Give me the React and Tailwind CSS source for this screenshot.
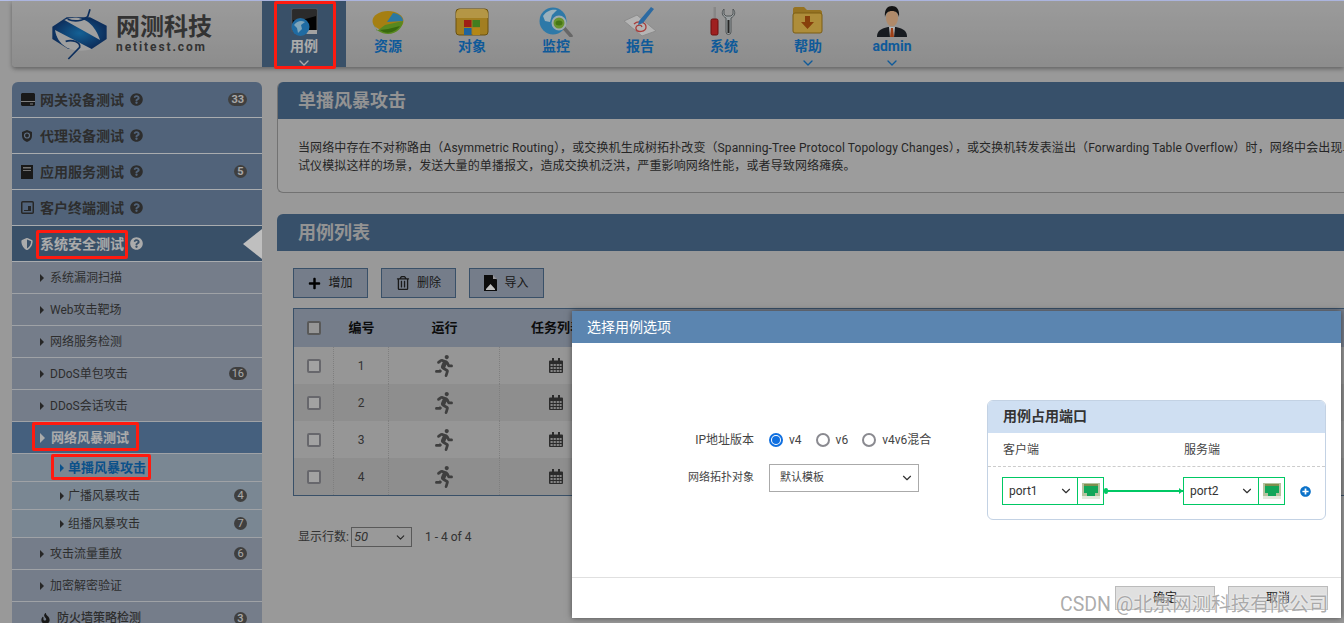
import { ChevronDown } from 'lucide-react'
import { FaFire, FaPlus, FaPlusCircle, FaQuestionCircle, FaRegTrashAlt, FaRunning, FaShieldAlt } from 'react-icons/fa'

/* Nav icons, drawn by hand. All share a 40x36 box */
function CaseIcon() {
  return (
    <svg width="40" height="36" viewBox="0 0 40 36" className="shrink-0">
      <rect x="8" y="8" width="25" height="22" fill="#050505" stroke="#777" />
      <path d="M9 9h23v6L18 19H9z" fill="#3a3a3a" />
      <path d="M20 29h13v4H20z" fill="#d8d8d8" />
      <circle cx="16.5" cy="26" r="9" fill="#2a8fd8" />
      <path d="M10 24c3-4 7-5 11-3l-4 3 1 4-4 4-1-5z" fill="#a8dcf8" />
    </svg>
  )
}

function ResourceIcon() {
  return (
    <svg width="40" height="36" viewBox="0 0 40 36" className="shrink-0">
      <ellipse cx="20" cy="20" rx="15.5" ry="10" fill="#dcaa18" />
      <path d="M5 22c2 7 8 11 15 11 9 0 15-7 15-13l-18 4-8 6z" fill="#76b62a" />
      <path d="M19 21l6-9c5 0 10 4 10 8z" fill="#39a0d8" />
      <path d="M12 29c5 4 14 4 20-4l-12 3z" fill="#4b8c10" />
    </svg>
  )
}

function ObjectIcon() {
  return (
    <svg width="40" height="36" viewBox="0 0 40 36" className="shrink-0">
      <rect x="4" y="8" width="32" height="26" rx="3" fill="#d8a82c" stroke="#8e6c14" />
      <path d="M4 14c0-4 2-6 5-6h22c3 0 5 2 5 6v3H4z" fill="#f0c95c" />
      <rect x="12" y="19" width="7.5" height="7" fill="#d4281e" />
      <rect x="20.5" y="19" width="7.5" height="7" fill="#5aa82a" />
      <rect x="12" y="27" width="7.5" height="7" fill="#2a86d4" />
      <rect x="20.5" y="27" width="7.5" height="7" fill="#f0b41e" />
    </svg>
  )
}

function MonitorIcon() {
  return (
    <svg width="40" height="36" viewBox="0 0 40 36" className="shrink-0">
      <circle cx="17" cy="20" r="13.5" fill="#3ea2e0" />
      <path d="M7 15c4-6 10-7 14-6l-5 5-2 7-5-1z" fill="#d0ecfb" />
      <path d="M28 27l7 8" stroke="#8a8a8a" strokeWidth="3.5" strokeLinecap="round" />
      <circle cx="23" cy="22" r="6.5" fill="#8cc63f" stroke="#d5e4ea" strokeWidth="2" />
      <ellipse cx="23" cy="22" rx="3.5" ry="2.5" fill="#5d9e1c" />
    </svg>
  )
}

function ReportIcon() {
  return (
    <svg width="40" height="36" viewBox="0 0 40 36" className="shrink-0">
      <path d="M4 20l13-6 19 16-14 5z" fill="#f0f0f0" stroke="#bbb" />
      <path d="M14 23c4-4 12-2 12 3s-9 6-10 2 5-5 6-2" fill="none" stroke="#e0524f" strokeWidth="1.3" />
      <path d="M19 20L31 6l3 2-11 14-5 2z" fill="#3b8ed8" />
    </svg>
  )
}

function SystemIcon() {
  return (
    <svg width="40" height="36" viewBox="0 0 40 36" className="shrink-0">
      <rect x="9.5" y="6" width="2.5" height="12" fill="#b5b5b5" />
      <rect x="7" y="18" width="7" height="16" rx="1.5" fill="#d52b2b" stroke="#901515" />
      <path d="M20 8c-3 3-2 7 2 9v14a2.5 2.5 0 005 0V17c4-2 5-6 2-9v5l-2 2h-5l-2-2z" fill="#cfd6d9" stroke="#6d7375" />
      <rect x="23.5" y="19" width="2" height="13" fill="#333" />
    </svg>
  )
}

function HelpIcon() {
  return (
    <svg width="40" height="36" viewBox="0 0 40 36" className="shrink-0">
      <path d="M5 8c0-1 1-2 2-2h9l3 3h13c1 0 2 1 2 2v3H5z" fill="#c99a2e" />
      <rect x="5" y="12" width="29" height="20" rx="2" fill="#e8bd4e" stroke="#a57d1c" />
      <path d="M17 15h5v6h4l-6.500 7-6.500-7h4z" fill="#b4540f" />
    </svg>
  )
}

function AdminIcon() {
  return (
    <svg width="40" height="36" viewBox="0 0 40 36" className="shrink-0">
      <path d="M5 36c0-6 3-8 11-10h8c8 2 11 4 11 10z" fill="#20252b" />
      <path d="M17 26h6l-1 10h-4z" fill="#f4f4f4" />
      <path d="M19 27h2l1 9h-4z" fill="#d2541e" />
      <ellipse cx="20" cy="17" rx="6" ry="8.500" fill="#eab98e" />
      <path d="M13 16c-1-8 3-11 7-11s8 3 7 11c-1-4-3-6-7-6s-6 2-7 6z" fill="#1a1a1a" />
    </svg>
  )
}

function LogoMark() {
  return (
    <svg width="70" height="60" viewBox="0 0 210 180" className="shrink-0">
      <defs>
        <radialGradient id="band" cx="0.5" cy="0.5" r="0.5">
          <stop offset="0" stopColor="#1b82c8" />
          <stop offset="1" stopColor="#123f7c" />
        </radialGradient>
      </defs>
      <path d="M22 68L65 40h70l50 25v40l-45 30H70l-48-30z" fill="url(#band)" />
      <path d="M58 48c35-16 85-8 107 60z" fill="#d4d4d4" />
      <path d="M30 78l110 57c-40 12-100 5-110-57z" fill="#d4d4d4" />
      <path d="M68 46c20 8 45 6 60-8l7-22" fill="none" stroke="#123f7c" strokeWidth="5" />
      <path d="M62 112c20-6 45 2 42 18L70 165" fill="none" stroke="#123f7c" strokeWidth="5" />
    </svg>
  )
}

function ImportIcon() {
  return (
    <svg width="13" height="16" viewBox="0 0 13 16">
      <path d="M0 0h8.500L13 4.500V16H0z" fill="#111" />
      <path d="M9 0l4 4H9z" fill="#c8c8d0" />
      <path d="M2 14h9v1H2zM6.500 9l4.500 5H2z" fill="#fff" />
    </svg>
  )
}

function CalendarIcon() {
  return (
    <svg width="14" height="15" viewBox="0 0 14 15">
      <path d="M1 2.500h12a1 1 0 011 1V14a1 1 0 01-1 1H1a1 1 0 01-1-1V3.500a1 1 0 011-1z" fill="#3a3a3a" />
      <path d="M3 0h2v4H3zM9 0h2v4H9z" fill="#3a3a3a" />
      <path
        d="M1.500 6h2.200v2H1.500zM4.600 6h2.200v2H4.600zM7.700 6h2.200v2H7.700zM10.600 6h2v2h-2zM1.500 9h2.200v2H1.500zM4.600 9h2.200v2H4.600zM7.700 9h2.200v2H7.700zM10.600 9h2v2h-2zM1.500 12h2.200v2H1.500zM4.600 12h2.200v2H4.600zM7.700 12h2.200v2H7.700zM10.600 12h2v2h-2z"
        fill="#b0b0b0"
      />
    </svg>
  )
}

function DriveIcon() {
  return (
    <svg width="14" height="13" viewBox="0 0 14 13">
      <path d="M1 0h12l1 1v11l-1 1H1l-1-1V1z" fill="#222" />
      <path d="M0 8h14v1H0zM9 10.500h3v1H9z" fill="#aaa" />
    </svg>
  )
}

function ProxyIcon() {
  return (
    <svg width="12" height="12" viewBox="0 0 12 12">
      <path d="M6 0l5 2v4c0 3-2 5-5 6-3-1-5-3-5-6V2z" fill="#333" />
      <circle cx="6" cy="5.500" r="2.500" fill="none" stroke="#8097b3" strokeWidth="1.200" />
    </svg>
  )
}

function TabletIcon() {
  return (
    <svg width="13" height="13" viewBox="0 0 13 13">
      <rect x="0.750" y="0.750" width="11.500" height="11.500" rx="1" fill="none" stroke="#333" strokeWidth="1.500" />
      <path d="M3 9h4V5h3v5H3z" fill="#333" />
    </svg>
  )
}

function ServerIcon() {
  return (
    <svg width="12" height="14" viewBox="0 0 12 14">
      <path d="M0 0h12v14H0z" fill="#222" />
      <path d="M2 2h8v1.500H2zM2 5h8v1H2z" fill="#999" />
    </svg>
  )
}

function PortIcon() {
  return (
    <svg width="18" height="16" viewBox="0 0 18 16">
      <rect width="18" height="16" fill="#b5c4a0" />
      <path d="M2 1h14v9h-3v3H5v-3H2z" fill="#12a659" />
      <path d="M2 1h14v2H2z" fill="#7f8f4e" />
      <rect y="13" width="18" height="3" fill="#e4e8dd" />
    </svg>
  )
}

function Badge({ children }) {
  return (
    <span className="ml-auto mr-[15px] flex h-[13px] min-w-[13px] items-center justify-center rounded-full bg-[#555] px-[3px] text-[11px] leading-none text-[#e0e0e0]">
      {children}
    </span>
  )
}

function Help({ className = 'text-[#3d3d3d]' }) {
  return <FaQuestionCircle className={`ml-[6px] text-[13px] ${className}`} />
}

function GroupItem({ icon, label, badge }) {
  return (
    <div className="flex h-9 items-center border-b border-[#e2e6ea] bg-[#6c85a3] pl-[9px] text-sm font-bold text-[#3d3d3d]">
      <span className="flex w-[19px] items-center">{icon}</span>
      <span>{label}</span>
      <Help />
      {badge && <Badge>{badge}</Badge>}
    </div>
  )
}

function SubItem({ label, badge }) {
  return (
    <div className="flex h-8 items-center border-b border-[#d5d9de] bg-[#9ca7b8] pl-[28px] text-xs text-[#3d3d3d]">
      <span className="mr-[6px] h-0 w-0 border-y-[4px] border-l-[4px] border-y-transparent border-l-[#333]" />
      <span>{label}</span>
      {badge && <Badge>{badge}</Badge>}
    </div>
  )
}

function LeafItem({ label, badge, active }) {
  return (
    <div
      className={`flex h-7 items-center border-b border-[#d5d9de] bg-[#a3b4c4] pl-[48px] ${
        active ? 'text-[13px] font-bold text-[#0f6cb8]' : 'text-xs text-[#3d3d3d]'
      }`}
    >
      <span
        className={`mr-[4px] h-0 w-0 border-y-[4px] border-l-[4px] border-y-transparent ${
          active ? 'border-l-[#0f6cb8]' : 'border-l-[#333]'
        }`}
      />
      <span>{label}</span>
      {badge && <Badge>{badge}</Badge>}
    </div>
  )
}

function Sidebar() {
  return (
    <aside className="w-[250px] shrink-0 overflow-hidden rounded-t-md">
      <GroupItem icon={<DriveIcon />} label="网关设备测试" badge="33" />
      <GroupItem icon={<ProxyIcon />} label="代理设备测试" />
      <GroupItem icon={<ServerIcon />} label="应用服务测试" badge="5" />
      <GroupItem icon={<TabletIcon />} label="客户终端测试" />
      <div className="relative flex h-9 items-center border-b border-[#e2e6ea] bg-[#4d6b8b] pl-[9px] text-sm font-bold text-[#e4e4e4]">
        <span className="flex w-[19px] items-center">
          <FaShieldAlt className="text-[12px]" />
        </span>
        <span>系统安全测试</span>
        <Help className="text-[#e4e4e4]" />
        <span className="absolute right-0 top-[3px] h-0 w-0 border-y-[15px] border-r-[19px] border-y-transparent border-r-white" />
      </div>
      <SubItem label="系统漏洞扫描" />
      <SubItem label="Web攻击靶场" />
      <SubItem label="网络服务检测" />
      <SubItem label="DDoS单包攻击" badge="16" />
      <SubItem label="DDoS会话攻击" />
      <div className="flex h-8 items-center border-b border-[#d5d9de] bg-[#5d80a8] pl-[28px] text-[13px] font-bold text-[#e4e4e4]">
        <span className="mr-[6px] h-0 w-0 border-y-[5px] border-l-[5px] border-y-transparent border-l-[#e4e4e4]" />
        <span>网络风暴测试</span>
      </div>
      <LeafItem label="单播风暴攻击" active />
      <LeafItem label="广播风暴攻击" badge="4" />
      <LeafItem label="组播风暴攻击" badge="7" />
      <SubItem label="攻击流量重放" badge="6" />
      <SubItem label="加密解密验证" />
      <div className="flex h-8 items-center bg-[#9ca7b8] pl-[28px] text-xs font-medium text-[#3d3d3d]">
        <FaFire className="mr-[6px] text-[11px] text-[#222]" />
        <span>防火墙策略检测</span>
        <Badge>3</Badge>
      </div>
    </aside>
  )
}

function ToolButton({ icon, label }) {
  return (
    <button className="flex h-[30px] w-[75px] items-center justify-center gap-[7px] border border-[#4d6b8b] bg-[#9ca7b8] text-xs text-[#222]">
      {icon}
      {label}
    </button>
  )
}

function CaseRow({ n, striped }) {
  return (
    <div className={`grid h-[37px] grid-cols-[40px_55px_111px_1fr] items-center ${striped ? 'bg-[#bebebe]' : 'bg-[#c8c8c8]'}`}>
      <div className="flex h-full items-center justify-center border-r border-dotted border-[#aaa]">
        <span className="h-[14px] w-[14px] rounded-[2px] border-2 border-[#8a8a90] bg-[#d8d8d8]" />
      </div>
      <div className="flex h-full items-center justify-center border-r border-dotted border-[#aaa] text-xs text-[#444]">{n}</div>
      <div className="flex h-full items-center justify-center border-r border-dotted border-[#aaa]">
        <FaRunning className="text-[22px] text-[#555]" />
      </div>
      <div className="flex h-full items-center pl-[49px]">
        <CalendarIcon />
      </div>
    </div>
  )
}

function MainContent() {
  return (
    <main className="min-w-0 flex-1">
      <section className="h-[111px] overflow-hidden rounded-l-md border-b border-l border-[#999] bg-[#d0d0d0]">
        <h2 className="flex h-[37px] items-center bg-[#4a6b8e] pl-[20px] text-lg font-bold text-[#c4c4c4]">单播风暴攻击</h2>
        <div className="px-[20px] pt-[20px] text-xs leading-[18px] tracking-[0.12px] whitespace-nowrap text-[#333]">
          <p>当网络中存在不对称路由（Asymmetric Routing），或交换机生成树拓扑改变（Spanning-Tree Protocol Topology Changes），或交换机转发表溢出（Forwarding Table Overflow）时，网络中会出现单播风暴。</p>
          <p>试仪模拟这样的场景，发送大量的单播报文，造成交换机泛洪，严重影响网络性能，或者导致网络瘫痪。</p>
        </div>
      </section>

      <section className="mt-[21px] overflow-hidden rounded-tl-md">
        <h2 className="flex h-[37px] items-center bg-[#4a6b8e] pl-[21px] text-lg font-bold text-[#c4c4c4]">用例列表</h2>
        <div className="pl-[16px] pt-[17px]">
          <div className="flex gap-[13px]">
            <ToolButton icon={<FaPlus className="text-[13px] text-[#000]" />} label="增加" />
            <ToolButton icon={<FaRegTrashAlt className="text-[14px] text-[#222]" />} label="删除" />
            <ToolButton icon={<ImportIcon />} label="导入" />
          </div>
          <div className="mt-[10px] border-y border-l border-[#4d6b8b]">
            <div className="grid h-[38px] grid-cols-[40px_55px_111px_1fr] items-center bg-[#9ca7b8] text-[13px] font-bold text-[#111]">
              <div className="flex justify-center">
                <span className="h-[14px] w-[14px] rounded-[2px] border-2 border-[#777] bg-[#c8c8c8]" />
              </div>
              <div className="text-center">编号</div>
              <div className="text-center">运行</div>
              <div className="pl-[31px]">任务列表</div>
            </div>
            <CaseRow n="1" />
            <CaseRow n="2" striped />
            <CaseRow n="3" />
            <CaseRow n="4" striped />
          </div>
          <div className="mt-[31px] flex items-center pl-[5px] text-xs text-[#444]">
            <span>显示行数:</span>
            <span className="ml-[2px] flex h-[20px] w-[61px] items-center justify-between border border-[#777] pl-[2px] pr-[4px] text-[13px] italic">
              50
              <ChevronDown size={13} className="text-[#333]" />
            </span>
            <span className="ml-[13px]">1 - 4 of 4</span>
          </div>
        </div>
      </section>
    </main>
  )
}

function PortSelect({ name }) {
  return (
    <div className="flex h-[28px] w-[102px] border border-[#00c864]">
      <span className="flex w-[74px] items-center justify-between pl-[6px] pr-[4px] text-xs text-[#333]">
        {name}
        <ChevronDown size={14} className="text-[#333]" />
      </span>
      <span className="flex flex-1 items-center justify-center border-l border-[#00c864]">
        <PortIcon />
      </span>
    </div>
  )
}

function Radio({ label, checked }) {
  return (
    <span className="flex items-center gap-[6px] text-xs text-[#444]">
      <span className={`flex h-[14px] w-[14px] items-center justify-center rounded-full border-2 ${checked ? 'border-[#0f6fe0]' : 'border-[#8a8a90]'}`}>
        {checked && <span className="h-[8px] w-[8px] rounded-full bg-[#0f6fe0]" />}
      </span>
      {label}
    </span>
  )
}

function CaseDialog() {
  return (
    <div className="absolute left-[572px] top-[311px] flex h-[307px] w-[769px] flex-col bg-white shadow-[0_0_6px_rgba(0,0,0,0.5)]">
      <div className="flex h-8 items-center bg-[#5b85b0] pl-[15px] text-sm text-white">选择用例选项</div>
      <div className="flex flex-1 items-center justify-between pr-[15px]">
        <div className="mb-[2px] grid grid-cols-[182px_auto] items-center gap-x-[15px] gap-y-[10px] text-xs text-[#444]">
          <span className="text-right">IP地址版本</span>
          <div className="flex h-[28px] items-center gap-[14px]">
            <Radio label="v4" checked />
            <Radio label="v6" />
            <Radio label="v4v6混合" />
          </div>
          <span className="text-right text-[11px]">网络拓扑对象</span>
          <div className="flex h-[28px] w-[150px] items-center justify-between border border-[#aaa] pl-[10px] pr-[4px] text-[11px] text-[#444]">
            默认模板
            <ChevronDown size={14} className="text-[#333]" />
          </div>
        </div>
        <div className="h-[120px] w-[339px] overflow-hidden rounded-md border border-[#c3d2e4]">
          <div className="flex h-[32px] items-center bg-[#cfdff2] pb-[2px] pl-[15px] text-sm font-bold text-[#333]">用例占用端口</div>
          <div className="flex h-[34px] items-center border-b border-dashed border-[#ccc] text-xs text-[#444]">
            <span className="w-[196px] pl-[15px]">客户端</span>
            <span>服务端</span>
          </div>
          <div className="flex items-center pl-[14px] pt-[10px]">
            <PortSelect name="port1" />
            <div className="relative h-[2px] w-[79px] bg-[#00c864]">
              <span className="absolute -top-[2px] left-0 h-[6px] w-[4px] rounded-full bg-[#00c864]" />
              <span className="absolute -top-[2px] right-0 h-0 w-0 border-y-[3px] border-l-[4px] border-y-transparent border-l-[#00c864]" />
            </div>
            <PortSelect name="port2" />
            <FaPlusCircle className="ml-[15px] text-[11px] text-[#0b72c9]" />
          </div>
        </div>
      </div>
      <div className="flex h-[41px] justify-end gap-[13px] border-t border-[#e0e0e0] pr-[13px] pt-[8px]">
        <button className="h-[24px] w-[100px] border border-[#bbb] bg-[#e0e0e0] text-xs text-[#222]">确定</button>
        <button className="h-[24px] w-[100px] border border-[#bbb] bg-[#e0e0e0] text-xs text-[#222]">取消</button>
      </div>
    </div>
  )
}

const navItems = [
  { label: '资源', icon: <ResourceIcon /> },
  { label: '对象', icon: <ObjectIcon /> },
  { label: '监控', icon: <MonitorIcon /> },
  { label: '报告', icon: <ReportIcon /> },
  { label: '系统', icon: <SystemIcon /> },
  { label: '帮助', icon: <HelpIcon />, menu: true },
  { label: 'admin', icon: <AdminIcon />, menu: true },
]

function TopBar() {
  return (
    <header className="ml-3 flex h-[66px] rounded-bl-sm bg-gradient-to-b from-[#cfcfcf] to-[#bcbcbc] shadow-[0_2px_4px_rgba(0,0,0,0.35)]">
      <div className="flex w-[250px] shrink-0 items-center pl-[33px]">
        <LogoMark />
        <div className="ml-px text-[#444]">
          <div className="text-2xl font-bold leading-[26px]">网测科技</div>
          <div className="text-xs font-bold leading-[14px] tracking-[1.9px]">netitest.com</div>
        </div>
      </div>
      <div className="flex w-[84px] flex-col items-center bg-[#4d6b8b]">
        <CaseIcon />
        <span className="text-sm font-bold leading-[18px] text-[#e4e4e4]">用例</span>
        <ChevronDown size={16} className="shrink-0 text-[#e4e4e4]" />
      </div>
      {navItems.map((item) => (
        <div key={item.label} className="flex w-[84px] flex-col items-center">
          {item.icon}
          <span className="text-sm font-bold leading-[18px] text-[#1478cd]">{item.label}</span>
          {item.menu && <ChevronDown size={16} className="shrink-0 text-[#1478cd]" />}
        </div>
      ))}
    </header>
  )
}

const redMarks = [
  'left-[274px] top-[1px] h-[68px] w-[62px]',
  'left-[36px] top-[230px] h-[29px] w-[92px]',
  'left-[32px] top-[422px] h-[29px] w-[107px]',
  'left-[51px] top-[454px] h-[26px] w-[100px]',
]

export default function App() {
  return (
    <div className="relative h-[623px] w-full overflow-hidden bg-[#ccc] font-['Roboto','Noto_Sans_CJK_SC',sans-serif]">
      <div className="h-px bg-[#b3bde8]" />
      <TopBar />
      <div className="flex gap-[15px] pl-3 pt-[15px]">
        <Sidebar />
        <MainContent />
      </div>

      <div className="absolute inset-x-0 bottom-0 top-px bg-black/25" />
      <CaseDialog />

      {redMarks.map((cls) => (
        <div key={cls} className={`absolute rounded-[2px] border-[3px] border-[#ff1a0f] ${cls}`} />
      ))}

      <div className="absolute left-[1060px] top-[593px] text-[19.5px] leading-[24px] text-[#888]/70 [text-shadow:0_0_2px_#fff]">CSDN @北京网测科技有限公司</div>
    </div>
  )
}
